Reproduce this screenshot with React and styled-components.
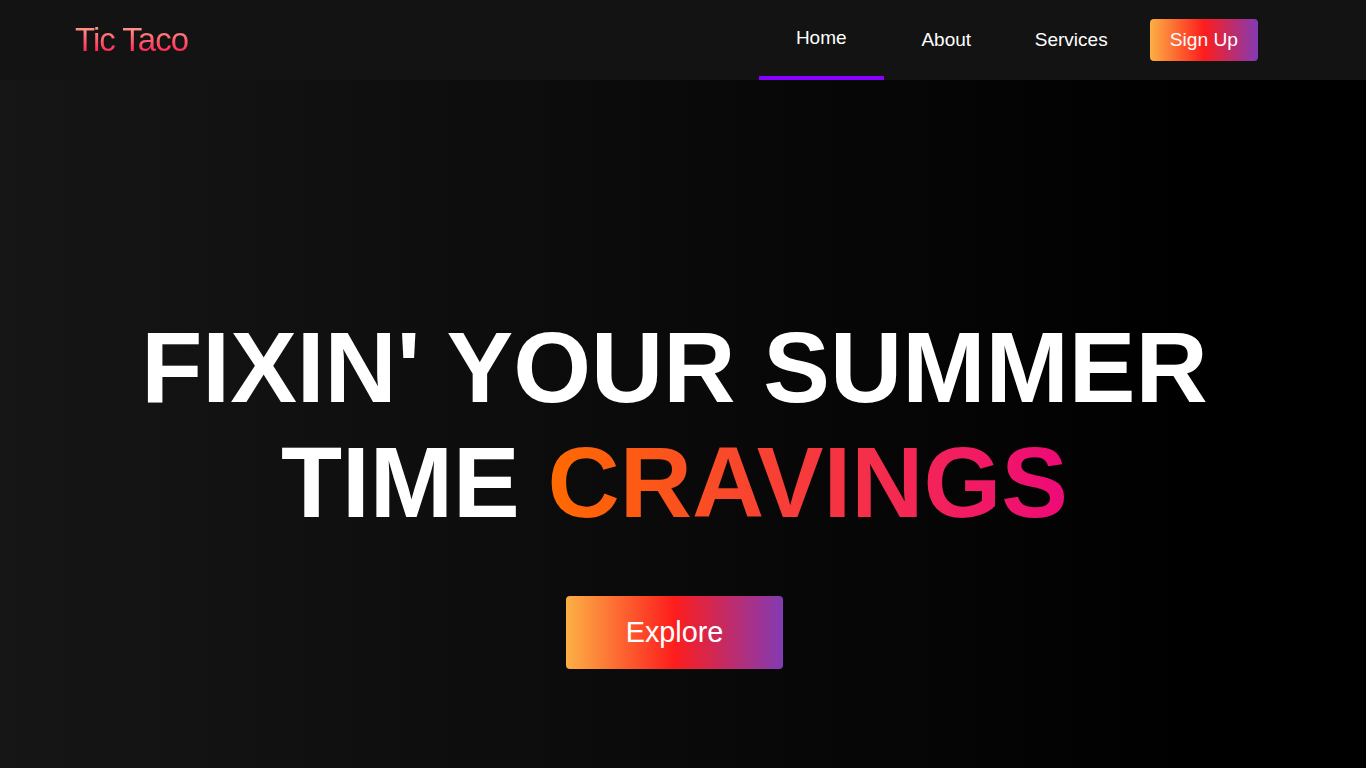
import styled, { createGlobalStyle } from "styled-components";

const GlobalStyle = createGlobalStyle`
  * {
    box-sizing: border-box;
    margin: 0;
    padding: 0;
  }
  body {
    font-family: "Liberation Sans", Arial, sans-serif;
    background: #000;
  }
`;

const brandGradient = "linear-gradient(90deg, #fcb045 0%, #fd1d1d 50%, #833ab4 100%)";

const links = ["Home", "About", "Services"];

export default function App() {
  return (
    <>
      <GlobalStyle />
      <Navbar>
        <Logo href="#">Tic Taco</Logo>
        <NavMenu>
          {links.map((l, i) => (
            <NavItem key={l} $active={i === 0}>
              <NavLink href="#">{l}</NavLink>
            </NavItem>
          ))}
          <SignUpItem>
            <SignUp>Sign Up</SignUp>
          </SignUpItem>
        </NavMenu>
      </Navbar>
      <Hero>
        <Heading>
          FIXIN' YOUR SUMMER
          <br />
          TIME <Cravings>CRAVINGS</Cravings>
        </Heading>
        <Explore>Explore</Explore>
      </Hero>
      <MoreContent />
    </>
  );
}

const Navbar = styled.nav`
  height: 80px;
  background: #131313;
  display: flex;
  align-items: center;
  justify-content: space-between;
  padding: 0 108px 0 75px;
`;

const Logo = styled.a`
  font-size: 33px;
  letter-spacing: -1px;
  text-decoration: none;
  background: linear-gradient(to top, #ff0844 0%, #ffb199 100%);
  -webkit-background-clip: text;
  background-clip: text;
  -webkit-text-fill-color: transparent;
  color: transparent;
`;

const NavMenu = styled.ul`
  display: flex;
  align-items: center;
  list-style: none;
  height: 80px;
`;

const NavItem = styled.li`
  width: 125px;
  height: 80px;
  display: flex;
  align-items: center;
  justify-content: center;
  border-bottom: ${(p) => (p.$active ? "4px solid #8800ff" : "none")};
`;

const NavLink = styled.a`
  color: #fff;
  font-size: 19px;
  text-decoration: none;
`;

const SignUpItem = styled.li`
  margin-left: 16px;
`;

const SignUp = styled.button`
  font-family: inherit;
  font-size: 19.2px;
  color: #fff;
  padding: 10px 20px;
  border: none;
  border-radius: 4px;
  background: ${brandGradient};
  cursor: pointer;
`;

const Hero = styled.section`
  height: 768px;
  padding: 230px 17px 0 0;
  background: linear-gradient(to right, #161616 0%, #000 88%);
  display: flex;
  flex-direction: column;
  align-items: center;
`;

const Heading = styled.h1`
  font-size: 100px;
  font-weight: 700;
  line-height: 115px;
  color: #fff;
  text-align: center;
`;

const Cravings = styled.span`
  background: linear-gradient(90deg, #ff6a00 0%, #ee0979 100%);
  -webkit-background-clip: text;
  background-clip: text;
  -webkit-text-fill-color: transparent;
  color: transparent;
`;

const Explore = styled.button`
  margin-top: 56px;
  font-family: inherit;
  font-size: 28.8px;
  color: #fff;
  padding: 20px 60px;
  border: none;
  border-radius: 4px;
  background: ${brandGradient};
  cursor: pointer;
`;

const MoreContent = styled.section`
  height: 3700px;
  background: #0d0d0d;
`;
